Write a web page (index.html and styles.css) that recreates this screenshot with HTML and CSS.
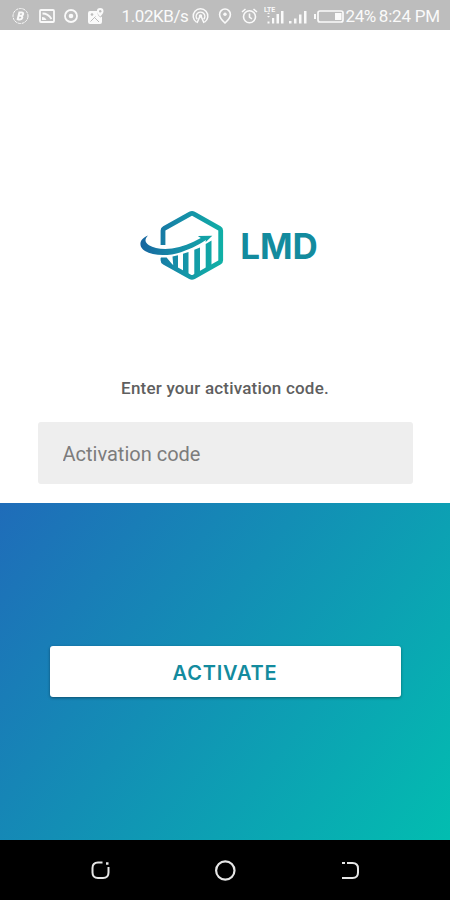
FILE: index.html
```html
<!DOCTYPE html>
<html lang="en">
<head>
  <meta charset="UTF-8">
  <meta name="viewport" content="width=device-width, initial-scale=1.0">
  <title>LMD - Activation</title>
  <link rel="stylesheet" href="styles.css">
</head>
<body>
  <div class="screen">
    <div class="status-bar">
      <div class="notifications">
        <svg width="17" height="18" viewBox="0 0 17 18" fill="none" stroke="currentColor">
          <circle cx="8.5" cy="9" r="7.5" stroke-dasharray="3 .7"/>
          <path d="M7.5 5 5.5 13M6.5 5.5h3.2c2.2 0 1.8 3-.5 3.3H7M9 9c2.2.3 1.5 3.5-1 3.5H5.5" stroke-width="2"/>
        </svg>
        <svg width="16" height="14" viewBox="0 0 16 14" fill="none" stroke="currentColor">
          <rect x="1" y="1" width="14" height="12" rx="1" stroke-width="1.8"/>
          <path d="M3.5 4.500c4 0 6.500 1.500 9 5.500" stroke-width="1.8"/>
          <path d="M3 11V8c2.500 0 3.500 1 4.500 3z" fill="currentColor" stroke="none"/>
        </svg>
        <svg width="14" height="14" viewBox="0 0 14 14" fill="none" stroke="currentColor">
          <circle cx="7" cy="7" r="6" stroke-width="1.8"/>
          <circle cx="7" cy="7" r="2.300" fill="currentColor" stroke="none"/>
        </svg>
        <svg width="16" height="17" viewBox="0 0 16 17">
          <path d="M2 3h7.500c-.5 3 .5 5 3 6.500L14 8.500V14a2 2 0 0 1-2 2H2a2 2 0 0 1-2-2V5a2 2 0 0 1 2-2z" fill="currentColor"/>
          <path d="m2.500 13.500 5-5M7 10l4 4" stroke="#bdbdbd"/>
          <circle cx="4" cy="6.500" r="1.300" fill="#bdbdbd"/>
          <path d="M12.200 0a3.300 3.300 0 0 0-3.300 3.300c0 2.300 3.300 5.500 3.300 5.500s3.300-3.200 3.300-5.500A3.300 3.300 0 0 0 12.200 0z" fill="currentColor"/>
          <circle cx="12.200" cy="3.300" r="1.200" fill="#bdbdbd"/>
        </svg>
      </div>
      <span class="speed">1.02KB/s</span>
      <div class="indicators">
        <svg width="17" height="16" viewBox="0 0 17 16" fill="none" stroke="currentColor" stroke-width="1.5">
          <path d="M4.500 14.200a7.300 7.300 0 1 1 8 0"/>
          <path d="M5.300 11.300a4.300 4.300 0 1 1 6.400 0"/>
          <path d="M8.500 7 12 15M8.500 7 5 15"/>
          <circle cx="8.500" cy="8" r="1" fill="currentColor"/>
        </svg>
        <svg width="14" height="16" viewBox="0 0 14 16" fill="none" stroke="currentColor" stroke-width="1.600">
          <path d="M7 1a5.400 5.400 0 0 0-5.400 5.400C1.600 10 7 15 7 15s5.400-5 5.400-8.600A5.400 5.400 0 0 0 7 1z"/>
          <circle cx="7" cy="6.300" r="1.700" fill="currentColor" stroke="none"/>
        </svg>
        <svg width="17" height="16" viewBox="0 0 17 16" fill="none" stroke="currentColor" stroke-width="1.600">
          <circle cx="8.500" cy="8.800" r="6"/>
          <path d="M8.500 5.500V9l2.500 2M1 4l3.500-3M16 4l-3.500-3"/>
        </svg>
        <svg width="21" height="22" viewBox="0 0 21 22" fill="currentColor">
          <text x="0" y="7" class="lte">LTE</text>
          <path d="M3 9l1.500-1.500L6 9zM3 11l1.500 1.500L6 11zM3.500 16.500h2v2h-2zM8 13h2.200v5.500H8zM12.500 9h2.500v9.500h-2.500zM17 6h2.500v12.500H17z"/>
        </svg>
        <svg width="19" height="22" viewBox="0 0 19 22" fill="currentColor">
          <path d="M0 16h2.500v2.500H0zM5 13.500h2.500v5H5zM10 9.500h2.500v9H10zM15 6h2.500v12.500H15z"/>
        </svg>
        <svg width="31" height="13" viewBox="0 0 31 13" fill="none" stroke="currentColor">
          <rect x="4" y="1" width="25" height="11" rx="2" stroke-width="1.700"/>
          <path d="M1 4v5" stroke-width="2"/>
          <rect x="21" y="3" width="6.500" height="7" fill="currentColor" stroke="none"/>
        </svg>
      </div>
      <span class="battery">24%</span>
      <span class="time">8:24 PM</span>
    </div>

    <div class="activation">
      <div class="logo">
        <svg width="84" height="74" viewBox="0 0 84 74" fill="none">
          <defs>
            <linearGradient id="logo-gradient" gradientUnits="userSpaceOnUse" x1="0" y1="35" x2="82" y2="45">
              <stop offset="0" stop-color="#17649f"/>
              <stop offset=".45" stop-color="#168ca8"/>
              <stop offset="1" stop-color="#10b0a6"/>
            </linearGradient>
          </defs>
          <path d="M23 37V22.500q0-1.500 1.300-2.200L50.300 5.900q1.700-.9 3.400 0L79.400 20.300q1.300.7 1.300 2.200v29.800q0 1.500-1.300 2.200L53.700 69q-1.700.9-3.400 0L24.300 54.500q-1.300-.7-1.300-2.200V50" stroke="url(#logo-gradient)" stroke-width="4.800"/>
          <!-- chart bars -->
          <path d="M20.600 49.500h6L32 56l-2 2zM32.500 48.500l5.500-1.200V63l-4.500-2.500zM43 45.800l5.500-1.800v24l-5.500-2.500zM54.300 41.800l5.700-2.300V66l-5.700 3zM65.700 36l5.800-3.500V60l-5.800 3z" fill="url(#logo-gradient)"/>
          <!-- arrow -->
          <path d="M8 27.500C-1 31-2 38.500 5 43c8 5 23 5.500 36 1.200C53 40 61 35.500 66 32l-.5 2.300 6.800-6.500-14.500.2 3 2C51 35.500 42 39 32 40.500c-9 1.200-18 0-23-3.200C4.500 34.500 4.500 31 8 27.500z" fill="url(#logo-gradient)"/>
        </svg>
        <span class="logo-text">LMD</span>
      </div>
      <label class="hint" for="code">Enter your activation code.</label>
      <input class="code-input" id="code" type="text" placeholder="Activation code">
    </div>

    <div class="action">
      <button class="activate-btn">ACTIVATE</button>
    </div>

    <div class="nav-bar">
      <svg width="20" height="20" viewBox="0 0 20 20" fill="none" stroke="currentColor" stroke-width="2">
        <path d="M12.500 2.500H8Q2.500 2.500 2.500 8v4.500Q2.500 18 8 18h5Q18.500 18 18.500 12.500V7"/>
        <path d="M16 3.500h2.500" stroke-width="2.500"/>
      </svg>
      <svg width="22" height="22" viewBox="0 0 22 22" fill="none" stroke="currentColor" stroke-width="2.200">
        <circle cx="11.300" cy="11.500" r="9.200"/>
      </svg>
      <svg width="20" height="20" viewBox="0 0 20 20" fill="none" stroke="currentColor" stroke-width="2">
        <path d="M7 3h5.500Q18 3 18 8.500v4q0 5.500-5.500 5.500H2"/>
        <path d="M2 3h3"/>
      </svg>
    </div>
  </div>
</body>
</html>
```
FILE: styles.css
```css
:root {
  --status-color: #bdbdbd;
  --primary-color: #138b9e;
  --input-color: #eeeeee;
}

* {
  box-sizing: border-box;
}

body {
  font-family: Roboto, sans-serif;
  background-color: #fff;
  margin: 0;
}

svg {
  display: block;
  flex-shrink: 0;
}

.screen {
  display: flex;
  flex-direction: column;
  width: 450px;
  height: 900px;
  overflow: hidden;
}

.status-bar {
  display: flex;
  align-items: center;
  height: 30px;
  padding: 2px 10px 0 12px;
  background-color: var(--status-color);
  color: #fafafa;
  font-size: 17px;
  white-space: nowrap;
}

.notifications {
  display: flex;
  align-items: center;
  gap: 9.500px;
}

.speed {
  width: 68px;
  margin-left: 18px;
  letter-spacing: -0.4px;
}

.indicators {
  display: flex;
  align-items: center;
  gap: 6px;
  margin-left: 2px;
}

.indicators svg:nth-child(2) {
  margin: 0 3px;
}

.indicators svg:nth-child(5) {
  margin-left: -2px;
}

.lte {
  font-size: 7px;
  font-weight: 700;
}

.battery {
  margin-left: 1px;
  letter-spacing: -0.4px;
}

.time {
  margin-left: auto;
  letter-spacing: -0.2px;
}

.activation {
  display: flex;
  flex-direction: column;
  align-items: center;
  height: 473px;
  padding-top: 178px;
}

.logo {
  display: flex;
  align-items: center;
  gap: 16px;
  height: 74px;
  margin-left: 8px;
}

.logo-text {
  padding-top: 2px;
  font-family: Inter, sans-serif;
  font-size: 35px;
  font-weight: 700;
  color: var(--primary-color);
}

.hint {
  margin-top: 95px;
  font-size: 17px;
  font-weight: 500;
  line-height: 22px;
  letter-spacing: 0.2px;
  color: #5f5f5f;
}

.code-input {
  width: 375px;
  height: 62px;
  margin-top: 23px;
  padding: 1px 25px 0;
  border: none;
  border-radius: 3px;
  background-color: var(--input-color);
  font-family: inherit;
  font-size: 20px;
}

.code-input::placeholder {
  color: #7c7c7c;
}

.action {
  display: flex;
  justify-content: center;
  align-items: center;
  height: 337px;
  background: linear-gradient(127deg, #1f6cb9 0%, #138eb5 43%, #02bdb0 100%);
}

.activate-btn {
  width: 351px;
  height: 51px;
  padding-top: 3px;
  border: none;
  border-radius: 3px;
  background-color: #fff;
  box-shadow: 0 1px 3px rgba(0, 0, 0, 0.4);
  color: var(--primary-color);
  font-family: Inter, sans-serif;
  font-size: 20px;
  font-weight: 600;
  letter-spacing: 0.8px;
}

.nav-bar {
  display: flex;
  justify-content: space-between;
  align-items: center;
  height: 60px;
  padding: 0 90px;
  background-color: #000;
  color: #e6e6e6;
}
```
